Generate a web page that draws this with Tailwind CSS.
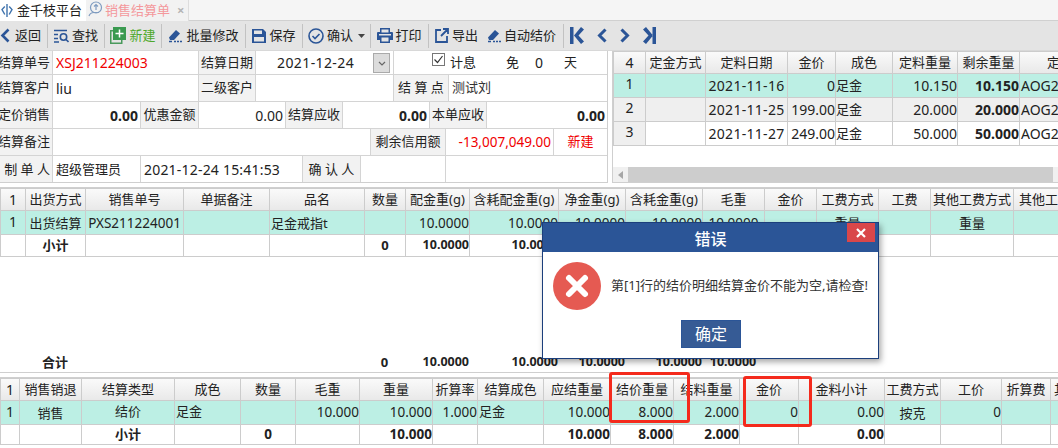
<!DOCTYPE html>
<html>
<head>
<meta charset="utf-8">
<script src="https://cdn.jsdelivr.net/npm/@tailwindcss/browser@4"></script>
</head>
<body class="bg-white">
<div class="relative w-[1058px] h-[448px] overflow-hidden bg-white text-[13px] text-[#222] font-['Noto_Sans','Noto_Sans_CJK_SC',sans-serif]">

  <!-- tabs -->
  <div class="flex h-[21px] bg-[#f5f5f5] border-b border-[#d0d0d0]">
    <div class="flex items-center w-[86px] h-[21px] pl-px bg-white">
      <svg class="w-[12px] h-[15px]" viewBox="0 0 12 15" fill="none" stroke="#3f73ad" stroke-width="1.400"><path d="M6 1v13"/><path d="M3.800 3.500 1 6.500l2.800 5M8.200 3.500l2.800 3-2.800 5"/></svg>
      <span class="ml-[4px]">金千枝平台</span>
    </div>
    <div class="flex items-center w-[103px] h-[21px] bg-[#f2f2f2] border-r border-[#ddd]">
      <svg class="ml-[2px] mb-[3px] w-[15px] h-[16px]" viewBox="0 0 15 16" fill="none" stroke="#7f9cc0" stroke-width="1.200"><circle cx="8" cy="6.500" r="5.500"/><path d="M1 15c1-3 3-3.500 5-3.500h5M8 3.500v5.500M6 5.500 8 3.500l2 2"/></svg>
      <span class="ml-[2px] text-[#f4989c]">销售结算单</span>
      <span class="ml-[7px] text-[13px] font-bold leading-none text-[#b5b5b5]">×</span>
    </div>
  </div>

  <!-- toolbar -->
  <div class="flex items-center h-[29px] bg-[#e4e4e4] text-[#222]">
    <div class="flex items-center w-[47px] h-full gap-[5px]">
      <svg class="w-[10px] h-[15px]" viewBox="0 0 10 15" fill="none" stroke="#2b5597" stroke-width="2.600"><path d="M8.500 1.500 2.500 7.500l6 6"/></svg>
      <span>返回</span>
    </div>
    <div class="w-px h-[24px] bg-[#c2c2c2]"></div>
    <div class="flex items-center justify-center w-[56px] h-full gap-[3px]">
      <svg class="w-[15px] h-[14px]" viewBox="0 0 15 14" fill="none" stroke="#2b5597" stroke-width="1.600"><path d="M0 1.500h13M0 5.500h4M0 9.500h4M0 13h5"/><circle cx="9.500" cy="8" r="3.200"/><path d="m12 10.500 2.500 2.500"/></svg>
      <span>查找</span>
    </div>
    <div class="w-px h-[24px] bg-[#c2c2c2]"></div>
    <div class="flex items-center justify-center w-[56px] h-full gap-[3px]">
      <svg class="w-[16px] h-[17px]" viewBox="0 0 16 17"><rect x=".75" y="3.750" width="11" height="12.500" fill="#e4e4e4" stroke="#4a9a5c" stroke-width="1.500"/><rect x="3" y="0" width="13" height="13" fill="#3a9a50"/><path d="M9.500 2.500v8M5.500 6.500h8" stroke="#fff" stroke-width="1.500"/></svg>
      <span class="text-[#4ea82a]">新建</span>
    </div>
    <div class="w-px h-[24px] bg-[#c2c2c2]"></div>
    <div class="flex items-center justify-center w-[83px] h-full gap-[4px]">
      <svg class="w-[14px] h-[15px]" viewBox="0 0 14 15"><path d="M1 9.500 8 2l4 3.500-6 6.500H2z" fill="#2b5597"/><path d="M6 13.500h2M9 13.500h2M12 13.500h2M1 13.500h3" stroke="#2b5597" stroke-width="1.700"/></svg>
      <span>批量修改</span>
    </div>
    <div class="w-px h-[24px] bg-[#c2c2c2]"></div>
    <div class="flex items-center justify-center w-[56px] h-full gap-[3px]">
      <svg class="w-[14px] h-[14px]" viewBox="0 0 14 14"><path d="M0 0h11l3 3v11H0z" fill="#2b5597"/><rect x="2" y="1.500" width="8" height="3.500" fill="#e4e4e4"/><rect x="2" y="8" width="10" height="4.500" fill="#e4e4e4"/></svg>
      <span>保存</span>
    </div>
    <div class="w-px h-[24px] bg-[#c2c2c2]"></div>
    <div class="flex items-center justify-center w-[67px] h-full gap-[3px]">
      <svg class="w-[16px] h-[16px]" viewBox="0 0 16 16" fill="none" stroke="#2b5597" stroke-width="1.600"><circle cx="8" cy="8" r="7"/><path d="m4.500 8 2.500 2.500 4.500-4.500"/></svg>
      <span>确认</span>
      <svg class="ml-[2px] w-[7px] h-[4px]" viewBox="0 0 7 4"><path d="M0 0h7L3.500 4z" fill="#444"/></svg>
    </div>
    <div class="w-px h-[24px] bg-[#c2c2c2]"></div>
    <div class="flex items-center justify-center w-[57px] h-full gap-[2px]">
      <svg class="w-[16px] h-[15px]" viewBox="0 0 16 15"><path d="M3 0h10v4H3zM1 4h14a1 1 0 0 1 1 1v7h-3v3H3v-3H0V5a1 1 0 0 1 1-1z" fill="#2b5597"/><rect x="4.500" y="1.500" width="7" height="3" fill="#e4e4e4"/><rect x="2" y="6" width="12" height="1.500" fill="#e4e4e4"/><rect x="4.500" y="9.500" width="7" height="4" fill="#e4e4e4"/></svg>
      <span>打印</span>
    </div>
    <div class="w-px h-[24px] bg-[#c2c2c2]"></div>
    <div class="flex items-center w-[134px] h-full pl-[6px]">
      <svg class="w-[14px] h-[15px]" viewBox="0 0 14 15" fill="none" stroke="#2b5597" stroke-width="1.800"><path d="M6 2H1v12h11V8M8 1h5v5M13 1 6 8"/></svg>
      <span class="ml-[3px]">导出</span>
      <svg class="ml-[9px] w-[14px] h-[15px]" viewBox="0 0 14 15"><path d="M1 9.500 8 2l4 3.500-6 6.500H2z" fill="#2b5597"/><path d="M6 13.500h2M9 13.500h2M12 13.500h2M1 13.500h3" stroke="#2b5597" stroke-width="1.700"/></svg>
      <span class="ml-[3px]">自动结价</span>
    </div>
    <div class="w-px h-[24px] bg-[#c2c2c2]"></div>
    <div class="flex items-center h-full ml-[6px] gap-[13px]">
      <svg class="w-[14px] h-[17px]" viewBox="0 0 14 17" fill="#2b5597"><path d="M0 0h3.500v17H0zM11 0l3 2.500L8.500 8.500 14 14.500 11 17 4 8.500z"/></svg>
      <svg class="w-[10px] h-[15px]" viewBox="0 0 10 15" fill="none" stroke="#2b5597" stroke-width="3"><path d="M8.500 1.500 2.500 7.500l6 6"/></svg>
      <svg class="w-[10px] h-[15px]" viewBox="0 0 10 15" fill="none" stroke="#2b5597" stroke-width="3"><path d="m1.500 1.500 6 6-6 6"/></svg>
      <svg class="w-[13px] h-[17px]" viewBox="0 0 13 17" fill="#2b5597"><path d="M9.500 0H13v17H9.500zM3 0 0 2.500 5.500 8.500 0 14.500 3 17l7-8.500z"/></svg>
    </div>
  </div>

  <!-- top: settlement form and deposit table -->
  <div class="flex h-[133px] border-t border-[#d8d8d8]">
    <div class="w-[608px] h-[132px] overflow-hidden border-r border-b border-[#cfcfcf] [&>div]:flex [&>div]:items-center [&>div]:border-b [&>div]:border-[#d4d4d4] [&>div:last-child]:border-b-0">
      <div class="h-[24px]">
        <span class="w-[53px] h-full flex items-center justify-end pr-[2px] bg-[#f2f2f2] border-r border-[#d4d4d4] whitespace-nowrap overflow-hidden">结算单号</span>
        <span class="w-[146px] h-full flex items-center pl-[3px] text-[14px] text-[#f00000] border-r border-[#d4d4d4]">XSJ211224003</span>
        <span class="w-[57px] h-full flex items-center justify-center bg-[#f2f2f2] border-r border-[#d4d4d4]">结算日期</span>
        <span class="relative w-[138px] h-full flex items-center pl-[21px] text-[14px] tracking-[0.4px] border-r border-[#d4d4d4]">2021-12-24
          <span class="absolute right-[3px] top-[2px] w-[17px] h-[20px] flex items-center justify-center bg-[#dcdcdc] border border-[#aaa]">
            <svg class="w-[8px] h-[5px]" viewBox="0 0 8 5" fill="none" stroke="#666" stroke-width="1.200"><path d="m1 1 3 3 3-3"/></svg>
          </span>
        </span>
        <span class="flex items-center h-full">
          <svg class="ml-[38px] w-[13px] h-[13px] mb-[6px]" viewBox="0 0 13 13" fill="none"><rect x=".5" y=".5" width="12" height="12" stroke="#777"/><path d="m2.500 6.500 3 3 5-6.500" stroke="#333" stroke-width="1.200"/></svg>
          <span class="ml-[5px]">计息</span>
          <span class="ml-[30px]">免</span>
          <span class="ml-[10px] w-[20px] text-center text-[14px]">0</span>
          <span class="ml-[15px]">天</span>
        </span>
      </div>
      <div class="h-[27px]">
        <span class="w-[53px] h-full flex items-center justify-end pr-[2px] bg-[#f2f2f2] border-r border-[#d4d4d4] whitespace-nowrap overflow-hidden">结算客户</span>
        <span class="w-[146px] h-full flex items-center pl-[3px] text-[14px] border-r border-[#d4d4d4]">liu</span>
        <span class="w-[57px] h-full flex items-center justify-center bg-[#f2f2f2] border-r border-[#d4d4d4]">二级客户</span>
        <span class="w-[138px] h-full border-r border-[#d4d4d4]"></span>
        <span class="w-[55px] h-full flex items-center justify-center bg-[#f2f2f2] border-r border-[#d4d4d4]">结 算 点</span>
        <span class="pl-[3px] text-[#333]">测试刘</span>
      </div>
      <div class="h-[27px]">
        <span class="w-[53px] h-full flex items-center justify-end pr-[2px] bg-[#f2f2f2] border-r border-[#d4d4d4] whitespace-nowrap overflow-hidden">定价销售</span>
        <span class="w-[88px] h-full flex items-center justify-end pr-[2px] text-[14px] font-bold border-r border-[#d4d4d4]">0.00</span>
        <span class="w-[58px] h-full flex items-center justify-center bg-[#f2f2f2] border-r border-[#d4d4d4]">优惠金额</span>
        <span class="w-[87px] h-full flex items-center justify-end pr-[2px] text-[14px] border-r border-[#d4d4d4]">0.00</span>
        <span class="w-[57px] h-full flex items-center justify-center bg-[#f2f2f2] border-r border-[#d4d4d4]">结算应收</span>
        <span class="w-[87px] h-full flex items-center justify-end pr-[2px] text-[14px] font-bold border-r border-[#d4d4d4]">0.00</span>
        <span class="w-[57px] h-full flex items-center justify-center bg-[#f2f2f2] border-r border-[#d4d4d4]">本单应收</span>
        <span class="flex-1 h-full flex items-center justify-end pr-[2px] text-[14px] font-bold">0.00</span>
      </div>
      <div class="h-[27px]">
        <span class="w-[53px] h-full flex items-center justify-end pr-[2px] bg-[#f2f2f2] border-r border-[#d4d4d4] whitespace-nowrap overflow-hidden">结算备注</span>
        <span class="w-[318px] h-full border-r border-[#d4d4d4]"></span>
        <span class="w-[75px] h-full flex items-center justify-center bg-[#f2f2f2] border-r border-[#d4d4d4] whitespace-nowrap overflow-hidden">剩余信用额</span>
        <span class="w-[108px] h-full flex items-center justify-end pr-[2px] text-[13.500px] text-[#f00000] border-r border-[#d4d4d4]">-13,007,049.00</span>
        <span class="flex-1 text-center text-[#f00000]">新建</span>
      </div>
      <div class="h-[27px]">
        <span class="w-[53px] h-full flex items-center justify-end pr-[2px] bg-[#f2f2f2] border-r border-[#d4d4d4] whitespace-nowrap overflow-hidden">制 单 人</span>
        <span class="w-[88px] h-full flex items-center pl-[3px] border-r border-[#d4d4d4]">超级管理员</span>
        <span class="w-[162px] h-full flex items-center pl-[3px] text-[14px] tracking-[0.2px] border-r border-[#d4d4d4]">2021-12-24 15:41:53</span>
        <span class="w-[58px] h-full flex items-center justify-center bg-[#f2f2f2] border-r border-[#d4d4d4]">确 认 人</span>
        <span class="w-[85px] h-full border-r border-[#d4d4d4]"></span>
      </div>
    </div>

    <div class="relative ml-[4px] w-[446px] h-[132px] overflow-hidden border-l border-b border-[#cfcfcf]">
      <table class="table-fixed border-collapse w-[480px] [&_td]:border [&_td]:border-[#cccccc] [&_td]:whitespace-nowrap [&_td]:overflow-hidden [&_td]:leading-none [&_th]:border [&_th]:border-[#cccccc] [&_th]:font-normal [&_th]:whitespace-nowrap [&_th]:overflow-hidden">
        <colgroup><col class="w-[32px]"><col class="w-[60px]"><col class="w-[82px]"><col class="w-[48px]"><col class="w-[57px]"><col class="w-[65px]"><col class="w-[62px]"><col class="w-[74px]"></colgroup>
        <tr class="h-[21px] bg-linear-to-b from-[#fafafa] to-[#e8e8e8]"><th class="text-[14px]">4</th><th>定金方式</th><th>定料日期</th><th>金价</th><th>成色</th><th>定料重量</th><th>剩余重量</th><th class="text-left pl-[27px]">定</th></tr>
        <tr class="h-[24px] bg-[#bcefe4]"><td class="text-center text-[14px] pb-[3px]">1</td><td></td><td class="text-center text-[14px] tracking-[0.3px]">2021-11-16</td><td class="text-right text-[14px]">0</td><td>足金</td><td class="text-right text-[14px]">10.150</td><td class="text-right text-[14px] font-bold">10.150</td><td class="text-[14px] pl-[1px]">AOG2</td></tr>
        <tr class="h-[24px] bg-[#efefef]"><td class="text-center text-[14px] pb-[3px]">2</td><td></td><td class="text-center text-[14px] tracking-[0.3px]">2021-11-25</td><td class="text-right text-[14px]">199.00</td><td>足金</td><td class="text-right text-[14px]">20.000</td><td class="text-right text-[14px] font-bold">20.000</td><td class="text-[14px] pl-[1px]">AOG2</td></tr>
        <tr class="h-[24px]"><td class="text-center text-[14px] pb-[3px] bg-[#efefef]">3</td><td></td><td class="text-center text-[14px] tracking-[0.3px]">2021-11-27</td><td class="text-right text-[14px]">249.00</td><td>足金</td><td class="text-right text-[14px]">50.000</td><td class="text-right text-[14px] font-bold">50.000</td><td class="text-[14px] pl-[1px]">AOG2</td></tr>
      </table>
      <div class="absolute left-0 right-0 bottom-0 flex h-[15px] bg-[#f0f0f0]">
        <div class="w-[15px] flex items-center justify-center"><svg class="w-[5px] h-[8px]" viewBox="0 0 5 8"><path d="M5 0v8L0 4z" fill="#a6a6a6"/></svg></div>
        <div class="w-[425px] bg-[#cdcdcd]"></div>
      </div>
    </div>
  </div>

  <!-- sale lines -->
  <div class="mt-[4px] h-[186px] flex flex-col border-t border-b border-[#cfcfcf]">
    <table class="table-fixed border-collapse w-[1080px] [&_td]:border [&_td]:border-[#cccccc] [&_td]:whitespace-nowrap [&_td]:overflow-hidden [&_td]:leading-none [&_th]:border [&_th]:border-[#cccccc] [&_th]:font-normal [&_th]:whitespace-nowrap [&_th]:overflow-hidden">
      <colgroup><col class="w-[25px]"><col class="w-[60px]"><col class="w-[98px]"><col class="w-[86px]"><col class="w-[95px]"><col class="w-[41px]"><col class="w-[64px]"><col class="w-[89px]"><col class="w-[67px]"><col class="w-[77px]"><col class="w-[62px]"><col class="w-[52px]"><col class="w-[62px]"><col class="w-[52px]"><col class="w-[83px]"><col class="w-[67px]"></colgroup>
      <tr class="h-[22px] bg-linear-to-b from-[#fafafa] to-[#e8e8e8]"><th class="text-[14px]">1</th><th>出货方式</th><th>销售单号</th><th>单据备注</th><th>品名</th><th>数量</th><th>配金重(g)</th><th>含耗配金重(g)</th><th>净金重(g)</th><th>含耗金重(g)</th><th>毛重</th><th>金价</th><th>工费方式</th><th>工费</th><th>其他工费方式</th><th class="text-left pl-[5px]">其他工费</th></tr>
      <tr class="h-[24px] bg-[#bcefe4] [&>td]:pt-[2px]"><td class="text-center text-[14px] pb-[3px]">1</td><td class="text-center">出货结算</td><td class="text-center text-[13.500px]">PXS211224001</td><td></td><td class="pl-[1px]">足金戒指t</td><td></td><td class="text-right text-[13.500px]">10.0000</td><td class="text-right text-[13.500px]">10.0000</td><td class="text-right text-[13.500px]">10.0000</td><td class="text-right text-[13.500px]">10.0000</td><td class="text-center text-[13.500px]">10.0000</td><td></td><td class="text-center">重量</td><td></td><td class="text-center">重量</td><td></td></tr>
      <tr class="h-[22px] font-bold"><td></td><td class="text-center">小计</td><td></td><td></td><td></td><td class="text-center text-[13px]">0</td><td class="text-right text-[12.500px]">10.0000</td><td class="text-right text-[12.500px]">10.0000</td><td class="text-right text-[12.500px]">10.0000</td><td class="text-right text-[12.500px]">10.0000</td><td class="text-center text-[12.500px]">10.0000</td><td></td><td></td><td></td><td></td><td></td></tr>
    </table>
    <table class="mt-auto table-fixed w-[1080px] font-bold [&_td]:whitespace-nowrap [&_td]:leading-none">
      <colgroup><col class="w-[25px]"><col class="w-[60px]"><col class="w-[98px]"><col class="w-[86px]"><col class="w-[95px]"><col class="w-[41px]"><col class="w-[64px]"><col class="w-[89px]"><col class="w-[67px]"><col class="w-[77px]"><col class="w-[62px]"><col class="w-[52px]"><col class="w-[62px]"><col class="w-[52px]"><col class="w-[83px]"><col class="w-[67px]"></colgroup>
      <tr class="h-[20px]"><td></td><td class="text-center">合计</td><td></td><td></td><td></td><td class="text-center">0</td><td class="text-right text-[12.500px]">10.0000</td><td class="text-right text-[12.500px]">10.0000</td><td class="text-right text-[12.500px]">10.0000</td><td class="text-right text-[12.500px]">10.0000</td><td class="text-center text-[12.500px]">10.0000</td><td></td><td></td><td></td><td></td><td></td></tr>
    </table>
  </div>

  <!-- settlement lines -->
  <div class="mt-[4px] border-t border-[#cfcfcf]">
    <table class="table-fixed border-collapse w-[1080px] [&_td]:border [&_td]:border-[#cccccc] [&_td]:whitespace-nowrap [&_td]:overflow-hidden [&_td]:leading-none [&_th]:border [&_th]:border-[#cccccc] [&_th]:font-normal [&_th]:whitespace-nowrap [&_th]:overflow-hidden">
      <colgroup><col class="w-[19px]"><col class="w-[62px]"><col class="w-[93px]"><col class="w-[66px]"><col class="w-[55px]"><col class="w-[64px]"><col class="w-[73px]"><col class="w-[45px]"><col class="w-[66px]"><col class="w-[67px]"><col class="w-[63px]"><col class="w-[66px]"><col class="w-[59px]"><col class="w-[86px]"><col class="w-[56px]"><col class="w-[61px]"><col class="w-[49px]"><col class="w-[30px]"></colgroup>
      <tr class="h-[21px] bg-linear-to-b from-[#fafafa] to-[#e8e8e8]"><th class="text-[14px]">1</th><th>销售销退</th><th>结算类型</th><th>成色</th><th>数量</th><th>毛重</th><th>重量</th><th>折算率</th><th>结算成色</th><th>应结重量</th><th>结价重量</th><th>结料重量</th><th>金价</th><th>金料小计</th><th>工费方式</th><th>工价</th><th>折算费</th><th class="text-left pl-[3px]">其</th></tr>
      <tr class="h-[24px] bg-[#bcefe4] [&>td]:pt-[1px]"><td class="text-center text-[14px] pb-[3px]">1</td><td class="text-center">销售</td><td class="text-center pb-[3px]">结价</td><td class="pl-[1px] pb-[3px]">足金</td><td></td><td class="text-right text-[13.500px]">10.000</td><td class="text-right text-[13.500px]">10.000</td><td class="text-right text-[13.500px]">1.000</td><td class="pl-[1px] pb-[3px]">足金</td><td class="text-right text-[13.500px]">10.000</td><td class="text-right text-[13.500px]">8.000</td><td class="text-right text-[13.500px]">2.000</td><td class="text-right text-[13.500px]">0</td><td class="text-right text-[13.500px]">0.00</td><td class="text-center">按克</td><td class="text-right text-[13.500px]">0</td><td></td><td></td></tr>
      <tr class="h-[20px] font-bold"><td></td><td></td><td class="text-center">小计</td><td></td><td class="text-center text-[13.500px]">0</td><td></td><td class="text-right text-[13.500px]">10.000</td><td></td><td></td><td class="text-right text-[13.500px]">10.000</td><td class="text-right text-[13.500px]">8.000</td><td class="text-right text-[13.500px]">2.000</td><td></td><td class="text-right text-[13.500px]">0.00</td><td></td><td></td><td></td><td></td></tr>
    </table>
  </div>

  <!-- red annotation boxes -->
  <div class="absolute left-[609px] top-[372px] w-[81px] h-[51px] rounded-[3px] border-[3px] border-[#f42a1c]"></div>
  <div class="absolute left-[743px] top-[376px] w-[69px] h-[51px] rounded-[3px] border-[3px] border-[#f42a1c]"></div>

  <!-- error dialog -->
  <div class="absolute left-[542px] top-[222px] w-[337px] h-[137px] flex flex-col bg-white border border-[#1c3f7c] shadow-[2px_3px_6px_rgba(0,0,0,0.35)]">
    <div class="relative h-[29px] shrink-0 flex items-center justify-center bg-[#2b5597] text-white text-[16px] font-medium">
      <span class="mt-[2px]">错误</span>
      <div class="absolute right-[3px] top-0 w-[28px] h-[19px] flex items-center justify-center bg-[#d9474a]">
        <svg class="w-[10px] h-[10px]" viewBox="0 0 10 10" stroke="#fff" stroke-width="2.200"><path d="m1 1 8 8M9 1l-8 8"/></svg>
      </div>
    </div>
    <div class="flex items-center pl-[10px] pt-[10px]">
      <svg class="w-[48px] h-[48px]" viewBox="0 0 48 48"><circle cx="24" cy="24" r="24" fill="#e55a52"/><path d="m16 16 16 16M32 16 16 32" stroke="#fff" stroke-width="6" stroke-linecap="round"/></svg>
      <span class="ml-[10px] whitespace-nowrap text-[#333]">第[1]行的结价明细结算金价不能为空,请检查!</span>
    </div>
    <div class="mt-[10px] ml-[138px] w-[60px] h-[28px] flex items-center justify-center bg-[#365b95] border border-[#2b5597] text-white text-[16px]">确定</div>
  </div>
</div>
</body>
</html>
